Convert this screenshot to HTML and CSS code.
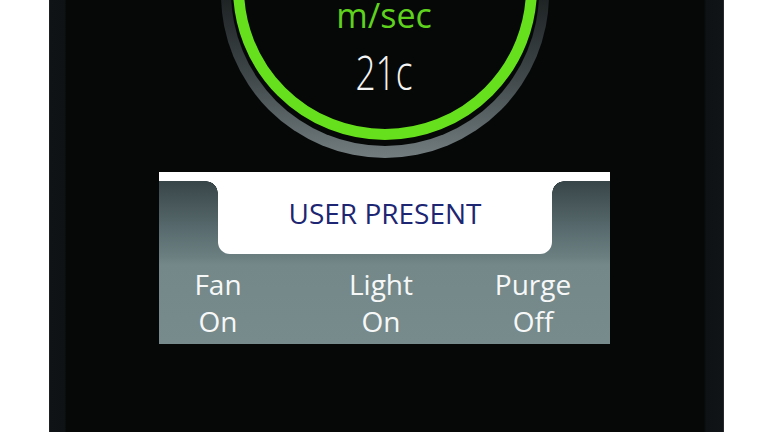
FILE: index.html
```html
<!DOCTYPE html>
<html lang="en">
<head>
    <meta charset="UTF-8">
    <meta name="viewport" content="width=device-width, initial-scale=1.0">
    <title>Controller Display</title>
    <link rel="stylesheet" href="styles.css">
</head>
<body>
    <div class="device">
        <svg class="gauge" width="340" height="172" viewBox="215 0 340 172">
            <defs>
                <linearGradient id="bezel" x1="0" y1="0" x2="0" y2="1">
                    <stop offset="0" stop-color="#0c0f10"/>
                    <stop offset="0.45" stop-color="#15191a"/>
                    <stop offset="0.75" stop-color="#3f4749"/>
                    <stop offset="1" stop-color="#737d7f"/>
                </linearGradient>
            </defs>
            <!-- outer bezel -->
            <circle cx="385" cy="-6" r="164" fill="url(#bezel)"/>
            <circle cx="385" cy="-8" r="154" fill="#060808"/>
            <!-- airflow ring -->
            <circle cx="385" cy="-12" r="146.5" fill="none" stroke="#66df1c" stroke-width="11"/>
            <text class="unit" x="384" y="28" text-anchor="middle">m/sec</text>
            <text class="temp" x="384" y="90" text-anchor="middle" textLength="57" lengthAdjust="spacingAndGlyphs">21c</text>
        </svg>

        <div class="status-panel">
            <div class="status-tab">USER PRESENT</div>
            <div class="status-grid">
                <div class="status-item">Fan<br>On</div>
                <div class="status-item">Light<br>On</div>
                <div class="status-item">Purge<br>Off</div>
            </div>
        </div>
    </div>
</body>
</html>
```

FILE: styles.css
```css
body {
    margin: 0;
    background-color: white;
    font-family: "Open Sans", Arial, sans-serif;
}

.device {
    margin-left: 49px;
    width: 675px;
    height: 432px;
    overflow: hidden;
    background: linear-gradient(90deg,
        #2a2f31 0px, #101315 1px, #0f1214 16px, #060808 17px,
        #060808 655px, #0e1214 657px, #101416 674px, #3a4042 675px);
}

.gauge {
    display: block;
    margin-left: 166px;
}

.gauge .unit {
    font-family: "Open Sans", sans-serif;
    font-size: 34px;
    fill: #5fd21d;
}

.gauge .temp {
    font-family: "Open Sans", sans-serif;
    font-weight: 300;
    font-size: 47px;
    fill: #f4f4f4;
}

.status-panel {
    margin-left: 110px;
    width: 451px;
    height: 163px;
    border-top: 9px solid white;
    background: linear-gradient(180deg,
        #384548 0px, #56686b 45px, #6b7f81 76px, #758889 84px, #778a8c 100%);
}

.status-tab {
    position: relative;
    margin-left: 59px;
    width: 334px;
    height: 73px;
    box-sizing: border-box;
    padding-top: 14px;
    background-color: white;
    border-radius: 0 0 12px 12px;
    color: #1d2672;
    font-size: 28px;
    line-height: 37px;
    text-align: center;
}

.status-tab::before,
.status-tab::after {
    content: "";
    position: absolute;
    top: 0;
    width: 12px;
    height: 12px;
}

.status-tab::before {
    left: -12px;
    background: radial-gradient(circle at 0 100%, transparent 11.5px, white 12px);
}

.status-tab::after {
    right: -12px;
    background: radial-gradient(circle at 100% 100%, transparent 11.5px, white 12px);
}

.status-grid {
    display: grid;
    grid-template-columns: 118px 208px 96px 1fr;
    padding-top: 12px;
    color: #f6f8f8;
    font-size: 28px;
    line-height: 37px;
    text-align: center;
}
```
